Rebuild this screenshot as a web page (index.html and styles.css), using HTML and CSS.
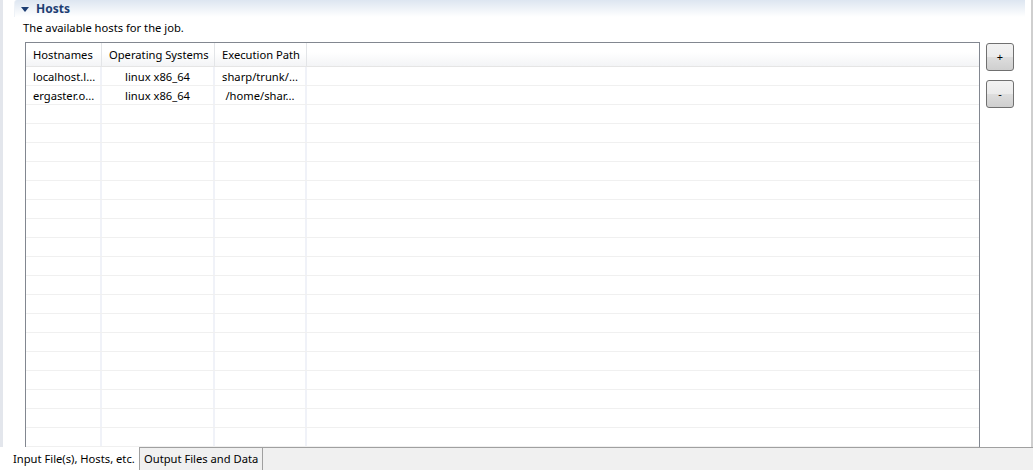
FILE: index.html
```html
<!DOCTYPE html>
<html lang="en">
<head>
    <meta charset="UTF-8">
    <title>Hosts</title>
    <link rel="stylesheet" href="styles.css">
</head>
<body>
    <div class="editor">
        <div class="main">
            <div class="section-title">
                <span class="twisty"></span>
                <span class="title-text">Hosts</span>
            </div>
            <div class="description">The available hosts for the job.</div>
            <div class="content">
                <div class="table">
                    <div class="row head">
                        <div class="cell">Hostnames</div>
                        <div class="cell">Operating Systems</div>
                        <div class="cell">Execution Path</div>
                        <div class="cell"></div>
                    </div>
                    <div class="row">
                        <div class="cell">localhost.l...</div>
                        <div class="cell center">linux x86_64</div>
                        <div class="cell center">sharp/trunk/...</div>
                        <div class="cell"></div>
                    </div>
                    <div class="row">
                        <div class="cell">ergaster.o...</div>
                        <div class="cell center">linux x86_64</div>
                        <div class="cell center">/home/shar...</div>
                        <div class="cell"></div>
                    </div>
                    <div class="row"><div class="cell"></div><div class="cell"></div><div class="cell"></div><div class="cell"></div></div>
                    <div class="row"><div class="cell"></div><div class="cell"></div><div class="cell"></div><div class="cell"></div></div>
                    <div class="row"><div class="cell"></div><div class="cell"></div><div class="cell"></div><div class="cell"></div></div>
                    <div class="row"><div class="cell"></div><div class="cell"></div><div class="cell"></div><div class="cell"></div></div>
                    <div class="row"><div class="cell"></div><div class="cell"></div><div class="cell"></div><div class="cell"></div></div>
                    <div class="row"><div class="cell"></div><div class="cell"></div><div class="cell"></div><div class="cell"></div></div>
                    <div class="row"><div class="cell"></div><div class="cell"></div><div class="cell"></div><div class="cell"></div></div>
                    <div class="row"><div class="cell"></div><div class="cell"></div><div class="cell"></div><div class="cell"></div></div>
                    <div class="row"><div class="cell"></div><div class="cell"></div><div class="cell"></div><div class="cell"></div></div>
                    <div class="row"><div class="cell"></div><div class="cell"></div><div class="cell"></div><div class="cell"></div></div>
                    <div class="row"><div class="cell"></div><div class="cell"></div><div class="cell"></div><div class="cell"></div></div>
                    <div class="row"><div class="cell"></div><div class="cell"></div><div class="cell"></div><div class="cell"></div></div>
                    <div class="row"><div class="cell"></div><div class="cell"></div><div class="cell"></div><div class="cell"></div></div>
                    <div class="row"><div class="cell"></div><div class="cell"></div><div class="cell"></div><div class="cell"></div></div>
                    <div class="row"><div class="cell"></div><div class="cell"></div><div class="cell"></div><div class="cell"></div></div>
                    <div class="row"><div class="cell"></div><div class="cell"></div><div class="cell"></div><div class="cell"></div></div>
                    <div class="row"><div class="cell"></div><div class="cell"></div><div class="cell"></div><div class="cell"></div></div>
                    <div class="row"><div class="cell"></div><div class="cell"></div><div class="cell"></div><div class="cell"></div></div>
                </div>
                <div class="buttons">
                    <button class="btn">+</button>
                    <button class="btn">-</button>
                </div>
            </div>
        </div>
        <div class="tabs">
            <div class="tab active">Input File(s), Hosts, etc.</div>
            <div class="tab">Output Files and Data</div>
            <div class="tab-rest"></div>
        </div>
    </div>
</body>
</html>
```

FILE: styles.css
```css
* {
    margin: 0;
    padding: 0;
    box-sizing: border-box;
}

body {
    background: white;
    font-family: 'Noto Sans', 'Open Sans', sans-serif;
    font-size: 11.2px;
    color: #000;
}

.editor {
    width: 1033px;
    height: 470px;
    display: flex;
    flex-direction: column;
    overflow: hidden;
}

.main {
    height: 447px;
    display: flex;
    flex-direction: column;
    border-left: 3px solid #e3e6ec;
    border-right: 2px solid #cfcfcf;
    overflow: hidden;
}

.section-title {
    height: 17px;
    margin-left: 11px;
    margin-right: 6px;
    padding-left: 6px;
    display: flex;
    align-items: center;
    gap: 7px;
    background: linear-gradient(to bottom, #dde6f1, #ffffff);
    border-left: 1px solid #eef2f7;
    border-top-left-radius: 3px;
}

.twisty {
    width: 0;
    height: 0;
    border-left: 4px solid transparent;
    border-right: 4px solid transparent;
    border-top: 5px solid #1d3e73;
    margin-top: 1px;
}

.title-text {
    font-weight: bold;
    color: #1d3e73;
    font-size: 12px;
    line-height: 14px;
}

.description {
    padding-left: 20px;
    line-height: 18px;
    margin-top: 2px;
}

.content {
    flex: 1;
    display: flex;
    padding-left: 22px;
    margin-top: 5px;
    min-height: 0;
}

.table {
    width: 955px;
    border: 1px solid #828790;
    border-bottom: none;
    overflow: hidden;
}

.row {
    display: grid;
    grid-template-columns: 76px 113px 92px 1fr;
    height: 19px;
    border-bottom: 1px solid #f0f0f0;
}

.cell {
    border-right: 2px solid #f0f2f8;
    line-height: 18px;
    padding-top: 1px;
    padding-left: 7px;
    white-space: nowrap;
    overflow: hidden;
}

.cell:last-child {
    border-right: none;
}

.cell.center {
    text-align: center;
    padding-left: 0;
}

.row.head {
    height: 24px;
    background: linear-gradient(to bottom, #ffffff 40%, #f3f4f6);
    border-bottom: 1px solid #e5e5e5;
}

.row.head .cell {
    line-height: 23px;
    padding-top: 0;
    border-right: 1px solid #e3e5e8;
    padding-left: 7px;
}

.row.head .cell:last-child {
    border-right: none;
}

.buttons {
    display: flex;
    flex-direction: column;
    gap: 9px;
    padding-left: 6px;
    padding-top: 1px;
}

.btn {
    width: 28px;
    height: 28px;
    border: 1px solid #707070;
    border-radius: 3px;
    background: linear-gradient(to bottom, #f2f2f2 0%, #ebebeb 48%, #dddddd 52%, #cfcfcf 100%);
    font-family: 'Noto Sans', sans-serif;
    font-size: 11px;
    color: #000;
    line-height: 26px;
}

.tabs {
    flex: 1;
    display: flex;
    background: #f0f0f0;
}

.tab {
    height: 23px;
    line-height: 22px;
    padding: 0 4px;
    border-top: 1px solid #a0a0a0;
    border-right: 1px solid #a0a0a0;
    white-space: nowrap;
}

.tab.active {
    background: white;
    border-top: none;
    width: 140px;
    padding-left: 13px;
    line-height: 24px;
}

.tab-rest {
    flex: 1;
    border-top: 1px solid #a0a0a0;
}
```
